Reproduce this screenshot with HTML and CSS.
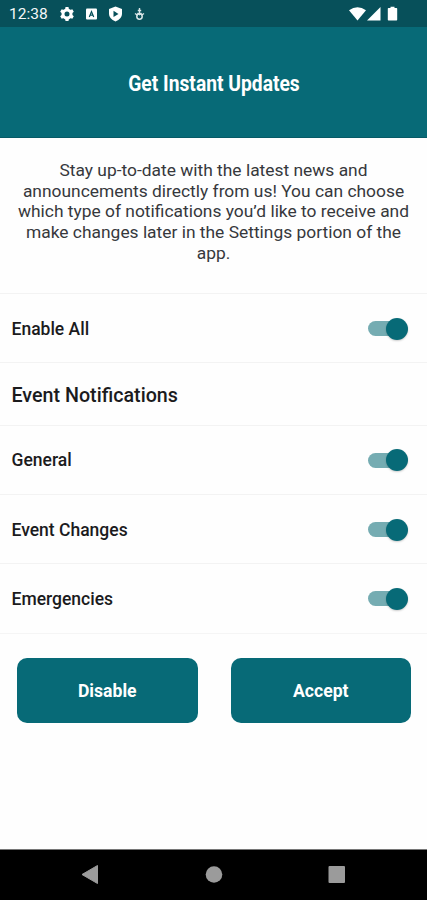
FILE: index.html
```html
<!DOCTYPE html>
<html lang="en">
<head>
<meta charset="utf-8">
<title>Get Instant Updates</title>
<link rel="stylesheet" href="styles.css">
</head>
<body>
<div class="status">
  <span class="clock">12:38</span>
  <svg class="status-left" width="90" height="16" viewBox="0 0 90 16" fill="#fff">
    <g transform="translate(12 8)">
      <circle r="4" fill="none" stroke="#fff" stroke-width="3"/>
      <path d="M-1.500-7h3l.5 3h-4zM-1.500 7h3l.5-3h-4z"/>
      <path d="M-1.500-7h3l.5 3h-4zM-1.500 7h3l.5-3h-4z" transform="rotate(60)"/>
      <path d="M-1.500-7h3l.5 3h-4zM-1.500 7h3l.5-3h-4z" transform="rotate(120)"/>
    </g>
    <rect x="31" y="2.500" width="11" height="11" rx="1"/>
    <path d="M34.300 11 36.500 5.500l2.200 5.500M35 9.200h3" fill="none" stroke="#07505a" stroke-width="1.200"/>
    <path d="M60.500 .5l6.500 2.400v5.100q0 4.800-6.500 7.500-6.500-2.700-6.500-7.500V2.900z"/>
    <path d="M58.500 4.800v6.200l5-3.100z" fill="#07505a"/>
    <path d="M84.500 2v5.500M82.800 4.500h3.400M80 7.500l2.200 1.500M89 7.500l-2.200 1.500M82.500 7l2 1.500 2-1.500" fill="none" stroke="#d9e6e8" stroke-width="1.400"/>
    <circle cx="84.500" cy="10.500" r="2.700" fill="none" stroke="#d9e6e8" stroke-width="1.500"/>
  </svg>
  <svg class="status-right" width="50" height="16" viewBox="0 0 50 16" fill="#fff">
    <path d="M0 4.200Q8.500-1.800 17 4.200L8.500 14.500z"/>
    <path d="M18 14.500 31.500 1v13.500z"/>
    <path d="M39.500 2h2V.8h4V2h2q.7 0 .7.700v11.100q0 .7-.7.700h-8q-.7 0-.7-.7V2.700q0-.7.7-.7z"/>
  </svg>
</div>
<header class="header"><h1 class="title">Get Instant Updates</h1></header>
<main class="main">
  <p class="intro">Stay up-to-date with the latest news and<br>announcements directly from us! You can choose<br>which type of notifications you’d like to receive and<br>make changes later in the Settings portion of the<br>app.</p>
  <div class="row"><span>Enable All</span><i class="toggle"></i></div>
  <div class="row section"><span>Event Notifications</span></div>
  <div class="row"><span>General</span><i class="toggle"></i></div>
  <div class="row"><span>Event Changes</span><i class="toggle"></i></div>
  <div class="row last"><span>Emergencies</span><i class="toggle"></i></div>
  <div class="actions"><button class="button">Disable</button><button class="button">Accept</button></div>
</main>
<nav class="nav">
  <svg width="427" height="50" viewBox="0 0 427 50" fill="#9b9b9b">
    <path d="M82 24.500 97.500 15.500v18z" stroke="#9b9b9b" stroke-linejoin="round"/>
    <circle cx="214" cy="24.500" r="8.300"/>
    <rect x="328.500" y="16" width="16.500" height="17" rx="1"/>
  </svg>
</nav>
</body>
</html>
```
FILE: styles.css
```css
* { box-sizing: border-box; }
body {
  margin: 0;
  width: 427px;
  height: 900px;
  display: flex;
  flex-direction: column;
  background: #fefefe;
  color: #1b1b1d;
  font-family: Roboto, "Liberation Sans", sans-serif;
  overflow: hidden;
}
.status {
  height: 27px;
  flex: none;
  display: flex;
  align-items: center;
  padding: 0 28px 0 9px;
  background: #07505a;
  color: #f4f8f8;
}
.clock { width: 39px; font-size: 15.5px; line-height: 27px; padding-top: 1px; }
.status-left { margin-left: 7px; }
.status-right { margin-left: auto; }
.header {
  height: 111px;
  flex: none;
  display: flex;
  justify-content: center;
  align-items: center;
  background: #076a77;
  border-bottom: 1px solid #075a66;
}
.title {
  margin: 3px 0 0;
  color: #fff;
  font-size: 22px;
  line-height: 28px;
  font-weight: 700;
  white-space: nowrap;
  transform: scaleX(.875);
}
.main { flex: 1; }
.intro {
  height: 155px;
  margin: 0;
  padding-top: 22px;
  text-align: center;
  white-space: nowrap;
  color: #36383c;
  font-size: 17.4px;
  line-height: 20.7px;
}
.row {
  height: 69.4px;
  display: flex;
  align-items: center;
  justify-content: space-between;
  padding: 1px 19px 0 11.5px;
  border-top: 1px solid #f3f3f3;
  font-size: 17.5px;
  font-weight: 500;
}
.section { height: 62.2px; padding-top: 3px; font-size: 19.7px; }
.last { height: 70.5px; padding-top: 0; border-bottom: 1px solid #f5f5f5; }
.toggle {
  position: relative;
  width: 40px;
  height: 22px;
}
.toggle::before, .toggle::after { content: ""; position: absolute; }
.toggle::before { left: 0; top: 3.5px; width: 32px; height: 15px; border-radius: 8px; background: #75acb2; }
.toggle::after { right: 0; top: 0; width: 22px; height: 22px; border-radius: 50%; background: #076a77; box-shadow: 0 1px 2px #0003; }
.actions { display: flex; gap: 33px; padding: 24px 16px 0 17px; }
.button {
  flex: 1;
  height: 65px;
  padding: 2px 0 0;
  border: 0;
  border-radius: 10px;
  background: #076a77;
  color: #fff;
  font: 700 17.6px Roboto, sans-serif;
}
.nav { height: 51px; flex: none; background: #000; border-top: 1px solid #777; }
.nav svg { display: block; }
```
